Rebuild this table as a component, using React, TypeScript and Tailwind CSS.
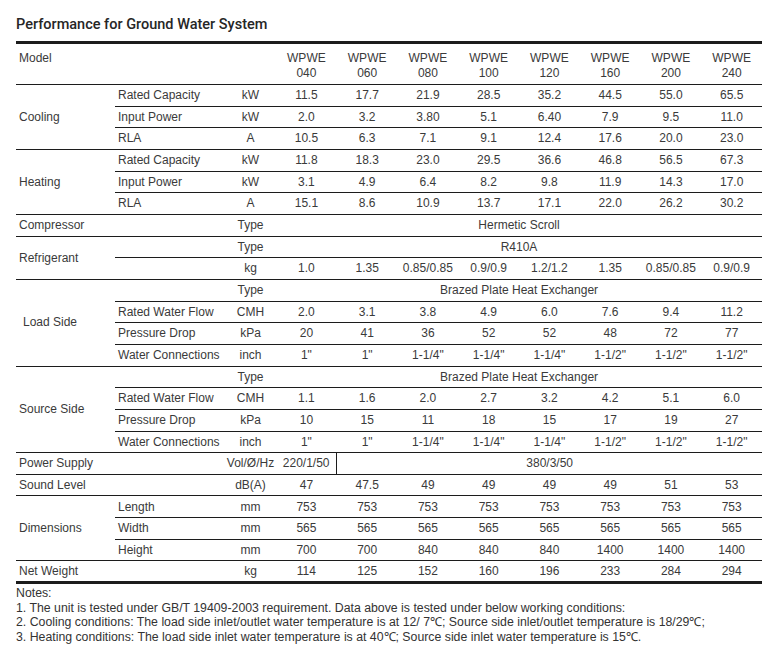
import React from "react"

const models = ["040", "060", "080", "100", "120", "160", "200", "240"]

type Row = {
  sub?: string
  unit: string
  values?: string[]
  span?: string
}

type Group = {
  label: string
  indent?: boolean
  rows: Row[]
  single?: boolean
}

const conn = ['1"', '1"', '1-1/4"', '1-1/4"', '1-1/4"', '1-1/2"', '1-1/2"', '1-1/2"']

const groups: Group[] = [
  {
    label: "Cooling",
    rows: [
      { sub: "Rated Capacity", unit: "kW", values: ["11.5", "17.7", "21.9", "28.5", "35.2", "44.5", "55.0", "65.5"] },
      { sub: "Input Power", unit: "kW", values: ["2.0", "3.2", "3.80", "5.1", "6.40", "7.9", "9.5", "11.0"] },
      { sub: "RLA", unit: "A", values: ["10.5", "6.3", "7.1", "9.1", "12.4", "17.6", "20.0", "23.0"] },
    ],
  },
  {
    label: "Heating",
    rows: [
      { sub: "Rated Capacity", unit: "kW", values: ["11.8", "18.3", "23.0", "29.5", "36.6", "46.8", "56.5", "67.3"] },
      { sub: "Input Power", unit: "kW", values: ["3.1", "4.9", "6.4", "8.2", "9.8", "11.9", "14.3", "17.0"] },
      { sub: "RLA", unit: "A", values: ["15.1", "8.6", "10.9", "13.7", "17.1", "22.0", "26.2", "30.2"] },
    ],
  },
  { label: "Compressor", single: true, rows: [{ unit: "Type", span: "Hermetic Scroll" }] },
  {
    label: "Refrigerant",
    rows: [
      { sub: "", unit: "Type", span: "R410A" },
      { sub: "", unit: "kg", values: ["1.0", "1.35", "0.85/0.85", "0.9/0.9", "1.2/1.2", "1.35", "0.85/0.85", "0.9/0.9"] },
    ],
  },
  {
    label: "Load Side",
    indent: true,
    rows: [
      { sub: "", unit: "Type", span: "Brazed Plate Heat Exchanger" },
      { sub: "Rated Water Flow", unit: "CMH", values: ["2.0", "3.1", "3.8", "4.9", "6.0", "7.6", "9.4", "11.2"] },
      { sub: "Pressure Drop", unit: "kPa", values: ["20", "41", "36", "52", "52", "48", "72", "77"] },
      { sub: "Water Connections", unit: "inch", values: conn },
    ],
  },
  {
    label: "Source Side",
    rows: [
      { sub: "", unit: "Type", span: "Brazed Plate Heat Exchanger" },
      { sub: "Rated Water Flow", unit: "CMH", values: ["1.1", "1.6", "2.0", "2.7", "3.2", "4.2", "5.1", "6.0"] },
      { sub: "Pressure Drop", unit: "kPa", values: ["10", "15", "11", "18", "15", "17", "19", "27"] },
      { sub: "Water Connections", unit: "inch", values: conn },
    ],
  },
]

const groups2: Group[] = [
  { label: "Sound Level", single: true, rows: [{ unit: "dB(A)", values: ["47", "47.5", "49", "49", "49", "49", "51", "53"] }] },
  {
    label: "Dimensions",
    rows: [
      { sub: "Length", unit: "mm", values: Array(8).fill("753") },
      { sub: "Width", unit: "mm", values: Array(8).fill("565") },
      { sub: "Height", unit: "mm", values: ["700", "700", "840", "840", "840", "1400", "1400", "1400"] },
    ],
  },
]

const line = "border-b border-[#1c1c1c]"

function GroupRows({ g, last }: { g: Group; last?: boolean }) {
  return (
    <>
      {g.rows.map((r, i) => {
        const bottom = last ? "border-b-[3px] border-[#1c1c1c]" : line
        return (
          <tr key={i} className="h-[21.67px]">
            {i === 0 && (
              <td
                rowSpan={g.rows.length}
                colSpan={g.single ? 2 : 1}
                className={`${bottom} ${g.indent ? "pl-[7px]" : "pl-[3px]"} text-left`}
              >
                {g.label}
              </td>
            )}
            {!g.single && <td className={`${bottom} pl-[3px] text-left`}>{r.sub}</td>}
            <td className={`${bottom} text-center`}>{r.unit}</td>
            {r.span ? (
              <td colSpan={8} className={`${bottom} text-center`}>
                {r.span}
              </td>
            ) : (
              r.values!.map((v, j) => (
                <td key={j} className={`${bottom} text-center`}>
                  {v}
                </td>
              ))
            )}
          </tr>
        )
      })}
    </>
  )
}

export default function App() {
  return (
    <div className="w-[766px] h-[655px] bg-white pt-[15px] pl-[16px] text-[#3a3a3a] font-['Liberation_Sans',Arial,sans-serif]">
      <h2 className="text-[14.5px] leading-[20px] font-medium text-[#262626] mb-[6px] font-['Roboto',Arial,sans-serif]">
        Performance for Ground Water System
      </h2>

      <table className="w-[746px] table-fixed border-collapse text-[12px] leading-[14.5px]">
        <colgroup>
          <col className="w-[99px]" />
          <col className="w-[110px]" />
          <col className="w-[51px]" />
          {models.map((m) => (
            <col key={m} className="w-[60.75px]" />
          ))}
        </colgroup>
        <thead>
          <tr className="h-[42px] border-t-[3px] border-[#1c1c1c]">
            <th colSpan={3} className={`${line} pl-[3px] pt-[7px] text-left align-top font-normal`}>
              Model
            </th>
            {models.map((m) => (
              <th key={m} className={`${line} pt-[7px] text-center align-top font-normal`}>
                WPWE
                <br />
                {m}
              </th>
            ))}
          </tr>
        </thead>
        <tbody>
          {groups.map((g) => (
            <GroupRows key={g.label} g={g} />
          ))}
          <tr className="h-[21.67px]">
            <td colSpan={2} className={`${line} pl-[3px] text-left`}>
              Power Supply
            </td>
            <td className={`${line} text-center whitespace-nowrap`}>Vol/Ø/Hz</td>
            <td className={`${line} border-r border-r-[#1c1c1c] text-center`}>220/1/50</td>
            <td colSpan={7} className={`${line} text-center`}>
              380/3/50
            </td>
          </tr>
          {groups2.map((g) => (
            <GroupRows key={g.label} g={g} />
          ))}
          <GroupRows g={{ label: "Net Weight", single: true, rows: [{ unit: "kg", values: ["114", "125", "152", "160", "196", "233", "284", "294"] }] }} last />
        </tbody>
      </table>

      <div className="mt-[2px] text-[12.3px] leading-[14.5px] text-[#333]">
        <p>Notes:</p>
        <p>1. The unit is tested under GB/T 19409-2003 requirement. Data above is tested under below working conditions:</p>
        <p>
          2. Cooling conditions: The load side inlet/outlet water temperature is at 12/ 7℃; Source side inlet/outlet temperature is 18/29℃;
        </p>
        <p>3. Heating conditions: The load side inlet water temperature is at 40℃; Source side inlet water temperature is 15℃.</p>
      </div>
    </div>
  )
}
